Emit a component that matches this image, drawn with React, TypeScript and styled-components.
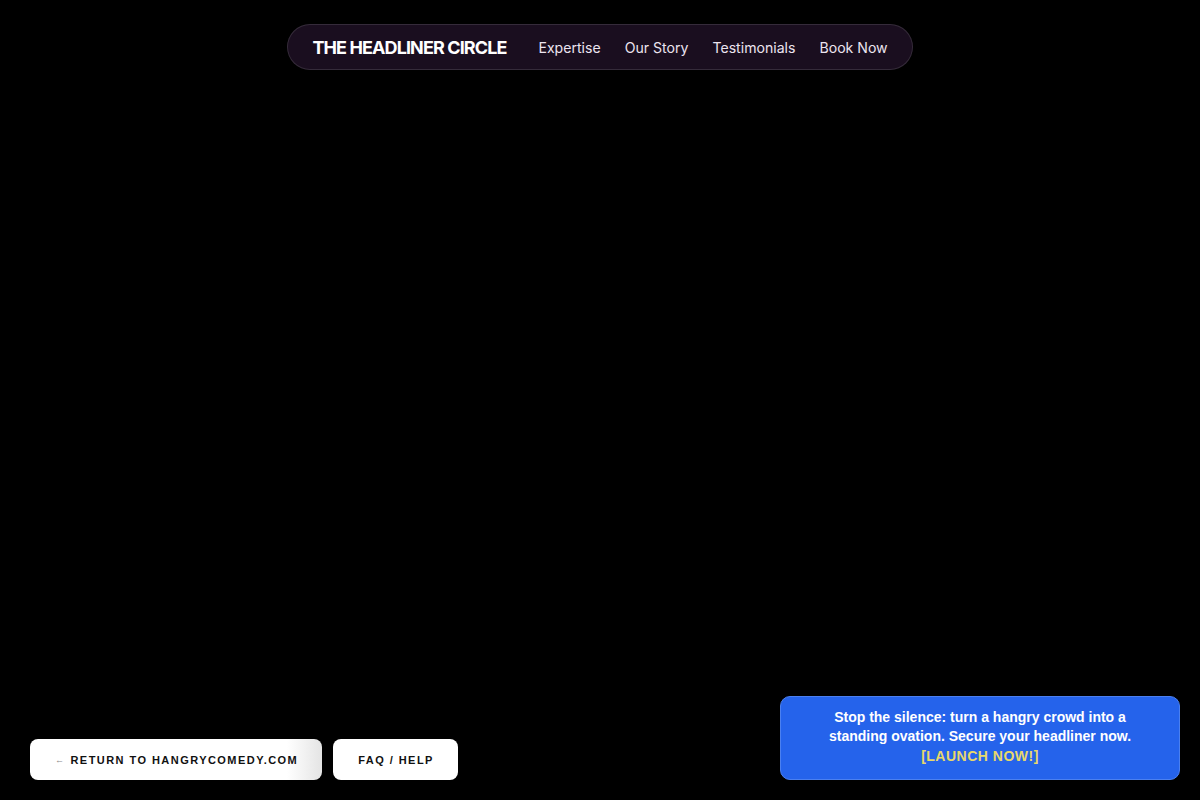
import * as React from 'react';
import styled, { createGlobalStyle } from 'styled-components';

const GlobalStyle = createGlobalStyle`
  html, body {
    margin: 0;
    padding: 0;
    background: #000;
  }
  * {
    box-sizing: border-box;
  }
`;

const links = ['Expertise', 'Our Story', 'Testimonials', 'Book Now'];

const App = () => {
  return (
    <>
      <GlobalStyle />
      <Page>
        <Header>
          <NavPill>
            <Brand>THE HEADLINER CIRCLE</Brand>
            <NavLinks>
              {links.map((l) => (
                <NavLink key={l} href="#">
                  {l}
                </NavLink>
              ))}
            </NavLinks>
          </NavPill>
        </Header>
        <Footer>
          <ButtonRow>
            <PillButton href="#" $fade>
              <Arrow>←</Arrow> RETURN TO HANGRYCOMEDY.COM
            </PillButton>
            <PillButton href="#">FAQ / HELP</PillButton>
          </ButtonRow>
          <Banner>
            Stop the silence: turn a hangry crowd into a standing ovation. Secure your headliner now.
            <br />
            <Launch>[LAUNCH NOW!]</Launch>
          </Banner>
        </Footer>
      </Page>
    </>
  );
};

const Page = styled.div({
  display: 'flex',
  flexDirection: 'column',
  justifyContent: 'space-between',
  height: '100vh',
  background: '#000',
});

const Header = styled.header({
  display: 'flex',
  justifyContent: 'center',
  paddingTop: 24,
});

const NavPill = styled.nav({
  display: 'flex',
  alignItems: 'center',
  gap: 32,
  height: 46,
  padding: '0 24px',
  borderRadius: 23,
  background: '#1a0e1f',
  border: '1px solid rgba(255, 255, 255, 0.12)',
  fontFamily: 'Inter, "Noto Sans", sans-serif',
});

const Brand = styled.span({
  fontSize: 18,
  fontWeight: 700,
  letterSpacing: '-0.9px',
  color: '#fff',
});

const NavLinks = styled.div({
  display: 'flex',
  gap: 24,
});

const NavLink = styled.a({
  fontSize: 14.1,
  color: '#ece4ef',
  textDecoration: 'none',
});

const Footer = styled.footer({
  display: 'flex',
  justifyContent: 'space-between',
  alignItems: 'flex-end',
  padding: '0 20px 20px 30px',
});

const ButtonRow = styled.div({
  display: 'flex',
  gap: 11,
});

const PillButton = styled.a<{ $fade?: boolean }>((p) => ({
  display: 'flex',
  alignItems: 'center',
  height: 41,
  padding: '0 24px 0 25px',
  borderRadius: 8,
  background: p.$fade ? 'linear-gradient(90deg, #ffffff 88%, #e4e4e4 100%)' : '#fff',
  color: '#111',
  fontFamily: '"Liberation Sans", Arial, sans-serif',
  fontSize: 11,
  fontWeight: 700,
  letterSpacing: '1.45px',
  textDecoration: 'none',
  whiteSpace: 'nowrap',
}));

const Arrow = styled.span({
  fontSize: 9,
  fontWeight: 400,
  color: '#888',
  marginRight: 5,
});

const Banner = styled.div({
  width: 400,
  padding: '11px 32px 13px',
  borderRadius: 10,
  background: '#2563eb',
  border: '1px solid #4b80f0',
  color: '#fff',
  fontFamily: '"Liberation Sans", Arial, sans-serif',
  fontSize: 14,
  fontWeight: 700,
  lineHeight: '19.5px',
  textAlign: 'center',
});

const Launch = styled.span({
  color: '#e8d86a',
  letterSpacing: '0.5px',
});

export default App;
